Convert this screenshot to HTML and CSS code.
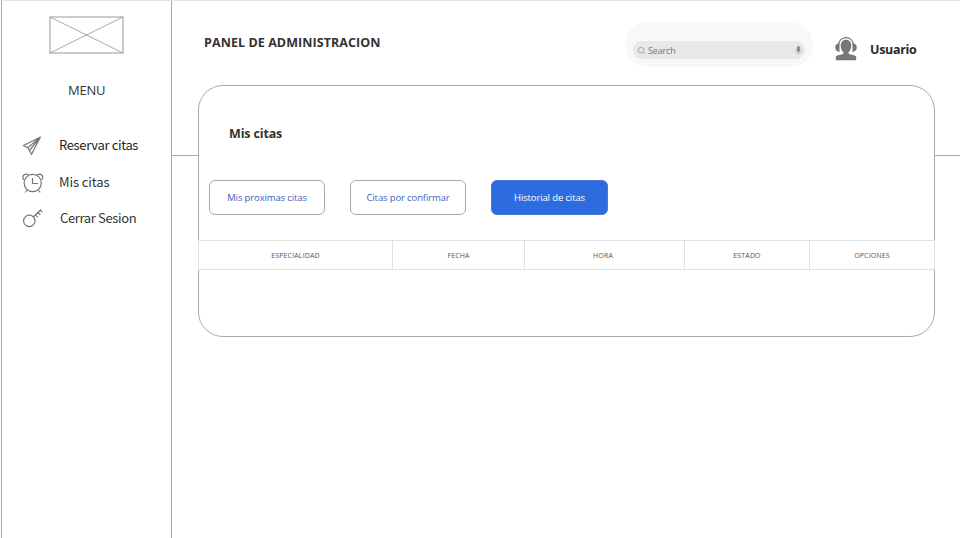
FILE: index.html
```html
<!DOCTYPE html>
<html lang="es">
<head>
<meta charset="utf-8">
<title>Panel de administracion</title>
<link rel="stylesheet" href="styles.css">
</head>
<body>
<div class="app">
  <aside class="sidebar">
    <svg class="logo" width="75" height="38" viewBox="0 0 75 38"><path d="M1 1L74 37M74 1L1 37" stroke="#aaa"/><rect x="1" y="1" width="73" height="36" stroke="#999"/></svg>
    <h2 class="menu-title">MENU</h2>
    <nav class="menu">
      <a class="menu-item current">
        <svg width="22" height="22" viewBox="0 0 22 22"><path d="M18.500 3L1.500 11.500L5.800 13.700L9.500 20.300L18.500 3L5.800 13.700M18.500 3L7.500 16.500"/></svg>
        <span>Reservar citas</span>
      </a>
      <a class="menu-item">
        <svg width="22" height="22" viewBox="0 0 22 22"><circle cx="10.700" cy="12" r="8.600"/><path d="M10.500 7V12.500H16M5.300 19L3.300 21.500M16.200 19L18.200 21.500M1.800 9C-.8 5 3 1.200 6.600 4.200M19.700 9C22.300 5 18.500 1.200 15 4.200"/></svg>
        <span class="t-mis">Mis citas</span>
      </a>
      <a class="menu-item">
        <svg width="22" height="22" viewBox="0 0 22 22"><circle cx="7.300" cy="13.900" r="5.700"/><path d="M11.300 10L19 2.500M13.500 7.800L15.800 10.200M16 5.400L18.400 7.800M18.300 3.200L20.300 5.200"/></svg>
        <span class="t-cerrar">Cerrar Sesion</span>
      </a>
    </nav>
  </aside>
  <main class="main">
    <header class="topbar">
      <h1 class="title">PANEL DE ADMINISTRACION</h1>
      <div class="search-shell">
        <div class="search">
          <svg width="9" height="9" viewBox="0 0 9 9"><circle cx="4.200" cy="4.200" r="2.900"/><path d="M6 6.200L7.500 7.500"/></svg>
          <span class="search-text">Search</span>
          <svg class="mic" width="7" height="9" viewBox="0 0 7 9"><rect x="2" y="0" width="3" height="6" rx="1.500"/><path d="M.8 3.500V4.500C.8 8 6.200 8 6.200 4.500V3.500M3.500 7V9"/></svg>
        </div>
      </div>
      <svg class="avatar" width="22" height="24" viewBox="0 0 22 24"><path class="band" d="M3.500 8C4.500-1.800 17.500-1.800 18.500 8"/><path d="M4.500 6C2 6.500 .2 8 .2 10.500S2 14.500 4.500 15ZM17.500 6C20 6.500 21.800 8 21.800 10.500S20 14.500 17.500 15ZM11 2.800C7.500 2.800 5.700 5.500 5.700 9C5.700 12 7 14 8.500 15.200V16.500C6.500 18.300 1 17.500 .8 20V23.300H21.200V20C21 17.500 15.500 18.300 13.500 16.500V15.200C15 14 16.300 12 16.300 9C16.300 5.500 14.500 2.800 11 2.800Z"/></svg>
      <span class="user">Usuario</span>
    </header>
    <section class="card">
      <h2 class="card-title">Mis citas</h2>
      <div class="tabs">
        <button class="tab">Mis proximas citas</button>
        <button class="tab">Citas por confirmar</button>
        <button class="tab active">Historial de citas</button>
      </div>
      <div class="table-head">
        <span>ESPECIALIDAD</span><span>FECHA</span><span class="hora">HORA</span><span>ESTADO</span><span>OPCIONES</span>
      </div>
    </section>
  </main>
</div>
</body>
</html>
```
FILE: styles.css
```css
* { box-sizing: border-box; }
body { margin: 0; background: #fff; color: #333; font-family: "Open Sans", sans-serif; }
h1, h2 { margin: 0; }
svg { flex: none; fill: none; display: block; }
span, h1, h2 { white-space: nowrap; }
.app { display: flex; height: 538px; overflow: hidden; border-top: 1px solid #e3e3e3; }
.sidebar { width: 171px; margin-left: 1px; flex: none; border-left: 1px solid #aaa; border-right: 1px solid #aaa; padding-top: 14.500px; }
.logo { margin-left: 47px; }
.menu-title { margin: 26.500px 0 0 66px; font-size: 13px; line-height: 20px; font-weight: 400; letter-spacing: -.2px; }
.menu { margin-top: 27px; }
.menu-item { display: flex; align-items: center; height: 36.500px; padding-left: 20px; gap: 15px; font: 13px/20px "Noto Sans CJK SC", sans-serif; letter-spacing: -.35px; color: #333; }
.menu-item svg { stroke: #777; stroke-width: 1.200; }
.current { color: #1f1f1f; }
.t-mis { letter-spacing: -.1px; }
.t-cerrar { margin-left: 1px; }
.main { flex: 1; min-width: 0; background: linear-gradient(#aaa, #aaa) 0 154px / 100% 1px no-repeat; }
.topbar { display: flex; height: 84px; padding-left: 32px; }
.title { width: 421px; margin-top: 32px; font-size: 12.500px; line-height: 20px; font-weight: 700; letter-spacing: .08px; }
.search-shell { width: 188px; height: 45px; margin-top: 21px; padding: 19px 8px 0; border-radius: 23px; background: #f8f8f8; }
.search { display: flex; align-items: center; height: 18px; padding: 0 3px 0 4px; border-radius: 9px; background: #e8e8ea; }
.search svg { stroke: #aaa; }
.search-text { flex: 1; margin-left: 2px; font-size: 9px; letter-spacing: -.15px; color: #777; }
.search .mic { stroke: #aaa; fill: #888; stroke-width: .6; }
.search .mic path { fill: none; }
.avatar { margin: 36px 0 0 22px; fill: #777; }
.band { fill: none; stroke: #777; stroke-width: 1.200; }
.user { margin: 39px 0 0 13px; font-size: 12.500px; line-height: 20px; font-weight: 700; letter-spacing: -.3px; color: #292929; }
.card { width: 737px; height: 252px; margin-left: 26px; border: 1px solid #aaa; border-radius: 25px; background: #fff; }
.card-title { padding: 38px 0 0 30px; font-size: 12.500px; line-height: 20px; font-weight: 700; letter-spacing: -.15px; }
.tabs { display: flex; gap: 25px; margin: 36px 0 0 10px; }
.tab { width: 116px; height: 35px; padding: 0; border: 1px solid #aaa; border-radius: 6px; background: #fff; color: #3b5fc0; font: 9.500px/18px "Open Sans", sans-serif; letter-spacing: -.13px; }
.active { width: 117px; background: #2d6cdf; border-color: #4779cc; color: #fff; font-weight: 500; }
.table-head { display: grid; grid-template-columns: 195px 132px 160px 125px 125px; height: 30px; margin: 25px -1px 0; background: #fff; border: solid #e0e0e0; border-width: 1px 0; font-size: 7px; letter-spacing: .15px; line-height: 29.500px; text-align: center; color: #555; }
.table-head span { height: 28px; border-right: 1px solid #e0e0e0; }
.table-head span:first-child { border-left: 1px solid #e0e0e0; }
.table-head .hora { padding-right: 3px; }
```
